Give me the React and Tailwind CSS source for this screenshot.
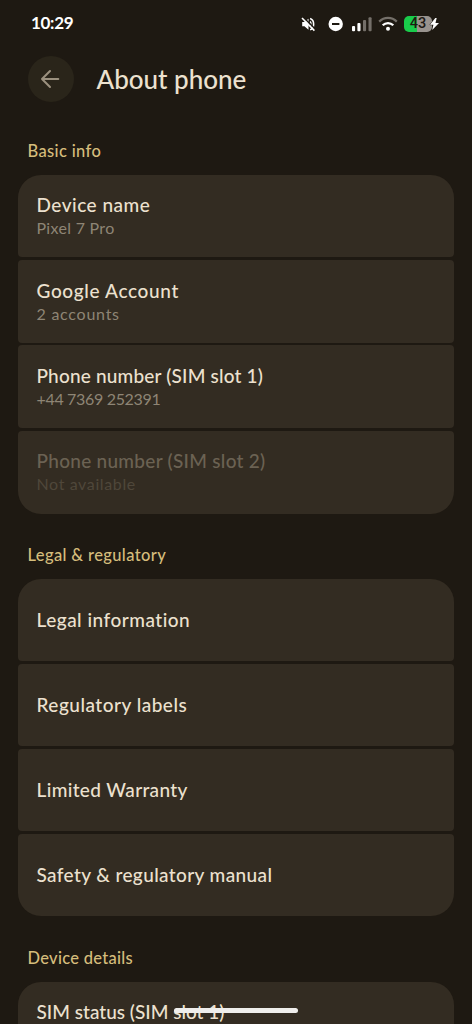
const basicInfo = [
  { title: "Device name", sub: "Pixel 7 Pro", titleClass: "tracking-[0.5px]", subClass: "tracking-[0.3px]" },
  { title: "Google Account", sub: "2 accounts", titleClass: "tracking-[0.65px]", subClass: "tracking-[0.75px]" },
  { title: "Phone number (SIM slot 1)", sub: "+44 7369 252391", titleClass: "tracking-[0.18px]", subClass: "tracking-[-0.33px]" },
  { title: "Phone number (SIM slot 2)", sub: "Not available", titleClass: "tracking-[0.28px]", subClass: "tracking-[0.62px]", disabled: true },
];

const legal = [
  { title: "Legal information", titleClass: "tracking-[0.5px]" },
  { title: "Regulatory labels", titleClass: "tracking-[0.5px]" },
  { title: "Limited Warranty", titleClass: "tracking-[0.36px]" },
  { title: "Safety & regulatory manual", titleClass: "tracking-[0.39px]" },
];

function StatusBar() {
  return (
    <div className="flex h-[47px] shrink-0 items-center justify-between pl-[31px] pr-[32px]">
      <span className="pb-px text-[17px] font-bold leading-[22px] tracking-[-0.3px] text-white">10:29</span>
      <div className="flex items-center">
        <svg className="mr-[12px]" width="15" height="16" viewBox="0 0 15 16" fill="none">
          <path d="M1.2 6h2.2L7.5 2.7v11L3.4 10.3H1.2z" fill="#fff" />
          <path d="M9.1 5.6c1.1 1.2 1.1 3.8 0 5" stroke="#fff" strokeWidth="1.5" />
          <path d="M9.1 2.6c4.7 1.5 4.7 9.7 0 11.2" stroke="#fff" strokeWidth="1.6" />
          <path d="M2 1 14.5 13.5" stroke="#1e1912" strokeWidth="1.6" />
          <path d="M1 2 13.4 14.6" stroke="#fff" strokeWidth="1.6" />
        </svg>
        <svg className="mr-[8px]" width="16" height="16" viewBox="0 0 16 16">
          <circle cx="7.7" cy="8" r="7.2" fill="#fff" />
          <path d="M4 8h7.4" stroke="#1e1912" strokeWidth="2" />
        </svg>
        <svg className="mr-[6px]" width="20" height="16" viewBox="0 0 20 16">
          <g fill="#fff">
            <rect x="0" y="9.9" width="3.1" height="5.3" rx="1" />
            <rect x="5.4" y="6.9" width="3.1" height="8.3" rx="1" />
          </g>
          <g fill="#746f69">
            <rect x="11" y="4" width="3.1" height="11.2" rx="1" />
            <rect x="16.5" y="1.2" width="3.1" height="14" rx="1" />
          </g>
        </svg>
        <svg className="mr-[6px]" width="20" height="16" viewBox="0 0 20 16" fill="none">
          <path d="M1.2 5.6c5-5 12.6-5 17.6 0" stroke="#746f69" strokeWidth="2.2" />
          <path d="M4.7 9.3c3-3 7.6-3 10.6 0" stroke="#fff" strokeWidth="2.3" />
          <circle cx="10" cy="12.8" r="2" fill="#fff" />
        </svg>
        <div className="relative flex h-[16px] w-[36px] items-center">
          <div className="flex h-[16px] w-[28px] items-center justify-center rounded-[5px] bg-[linear-gradient(90deg,#19cc4b_0_46%,#99938e_46%)] pt-[2px] text-[14.5px] font-medium leading-none text-[#1e1912]">
            <span className="font-[Roboto,sans-serif]">43</span>
          </div>
          <svg className="absolute right-0 top-[1px]" width="11" height="14" viewBox="0 0 11 14">
            <path d="M6.3 1 1 7.7h3.4L3.2 13 10 6H6.5L7.7 1z" fill="#fff" stroke="#1e1912" strokeWidth="1" paintOrder="stroke" />
          </svg>
        </div>
      </div>
    </div>
  );
}

function SectionTitle({ children, spacing }) {
  return (
    <h2 className={`h-[24px] px-[27.5px] text-[16.5px] font-medium leading-[24px] text-[#d5bd7c] ${spacing}`}>{children}</h2>
  );
}

function Row({ item }) {
  return (
    <div className="flex min-h-0 flex-1 flex-col justify-center rounded-[4px] bg-[#332c22] px-[18.5px] pb-[1.4px] first:rounded-t-[23px] last:rounded-b-[23px]">
      <div className={`${item.titleClass} ${item.disabled ? "text-[#6b6253]" : "text-[#ece1cf]"} whitespace-nowrap text-[19px] font-medium leading-[25px]`}>
        {item.title}
      </div>
      {item.sub && (
        <div className={`${item.subClass} ${item.disabled ? "text-[#4f473a]" : "text-[#8e8575]"} whitespace-nowrap text-[16px] leading-[21px]`}>
          {item.sub}
        </div>
      )}
    </div>
  );
}

export default function App() {
  return (
    <div className="relative flex h-[1024px] w-[472px] flex-col overflow-hidden bg-[#1e1912] font-[Lato,sans-serif]">
      <StatusBar />
      <header className="flex h-[65px] shrink-0 items-center pb-px pl-[27.5px]">
        <button className="flex size-[46px] items-center justify-center rounded-full bg-[#2a251a] pr-px" aria-label="Back">
          <svg width="20" height="20" viewBox="0 0 20 20" fill="none" stroke="#9b917f" strokeWidth="2" strokeLinecap="round" strokeLinejoin="round">
            <path d="M18.3 10H2M10 2 2 10l8 8" />
          </svg>
        </button>
        <h1 className="ml-[23px] pb-px text-[26px] font-medium leading-[32px] text-[#ece1cf]">About phone</h1>
      </header>
      <section className="mt-[27px] shrink-0">
        <SectionTitle spacing="tracking-[0.35px]">Basic info</SectionTitle>
        <div className="mx-[18px] mt-[11.5px] flex h-[339px] flex-col gap-[2.5px]">
          {basicInfo.map((item) => <Row key={item.title} item={item} />)}
        </div>
      </section>
      <section className="mt-[29.5px] shrink-0">
        <SectionTitle spacing="tracking-[0.37px]">Legal &amp; regulatory</SectionTitle>
        <div className="mx-[18px] mt-[12px] flex h-[337px] flex-col gap-[2.5px]">
          {legal.map((item) => <Row key={item.title} item={item} />)}
        </div>
      </section>
      <section className="mt-[30px] shrink-0">
        <SectionTitle spacing="tracking-[0.28px]">Device details</SectionTitle>
        <div className="mx-[18px] mt-[11.5px] h-[83px] rounded-t-[23px] bg-[#332c22] px-[18.5px] pt-[17px] text-[19px] font-medium leading-[25px] text-[#ece1cf]">
          SIM status (SIM slot 1)
        </div>
      </section>
      <div className="absolute left-[174px] top-[1008px] h-[5px] w-[124px] rounded-full bg-[#efeeec]" />
    </div>
  );
}
